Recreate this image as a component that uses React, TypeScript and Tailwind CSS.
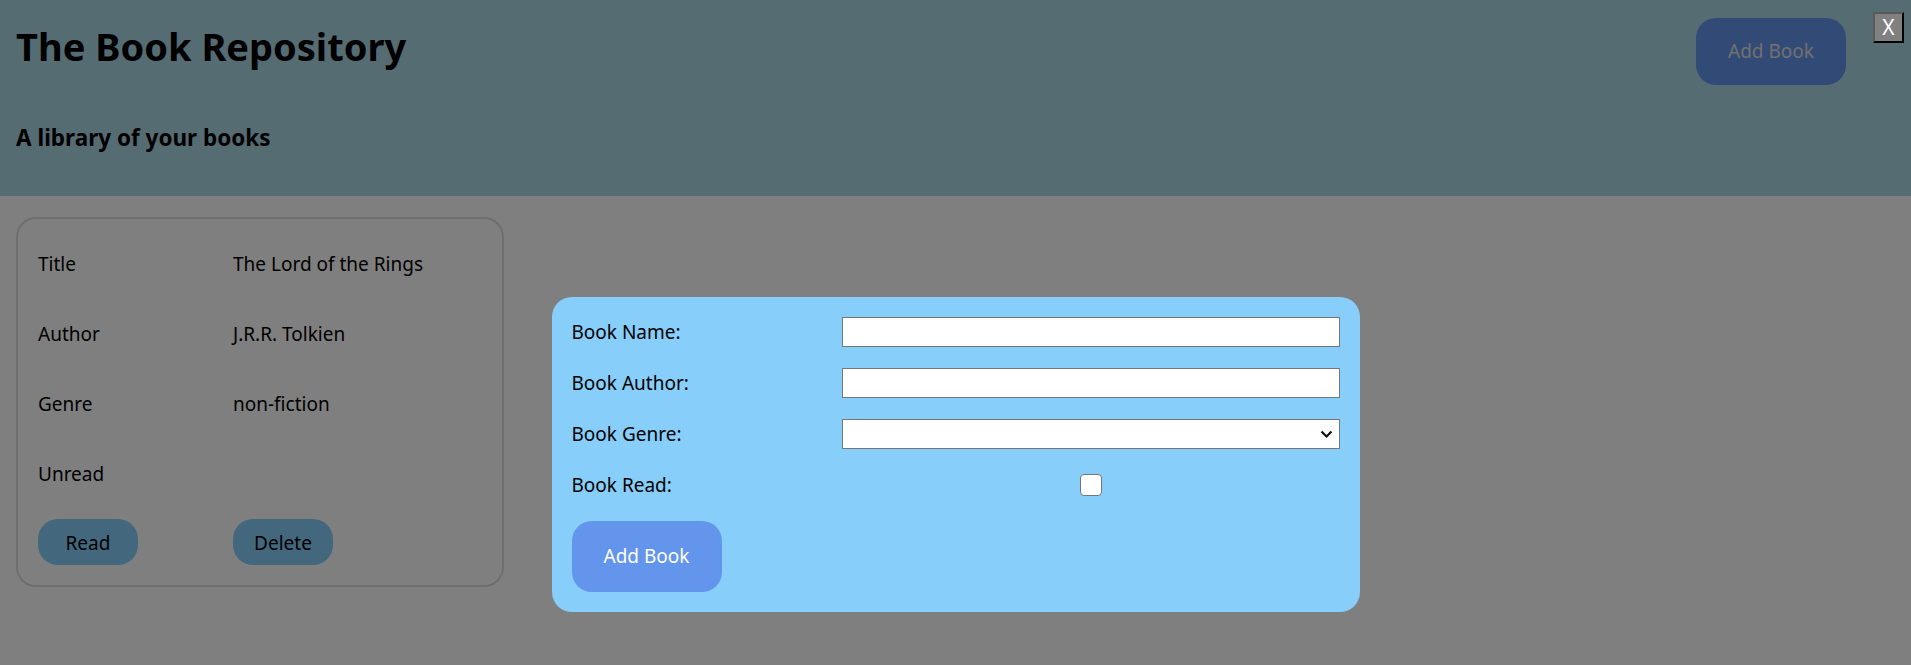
import React from "react";

const book = {
  title: "The Lord of the Rings",
  author: "J.R.R. Tolkien",
  genre: "non-fiction",
  read: false,
};

function BookCard() {
  return (
    <div className="w-[488px] rounded-[20px] border-2 border-[#dcdcdc] p-5 grid grid-cols-[195px_1fr] gap-y-5 text-[19px]">
      <div className="h-[50px] flex items-center">Title</div>
      <div className="h-[50px] flex items-center">{book.title}</div>
      <div className="h-[50px] flex items-center">Author</div>
      <div className="h-[50px] flex items-center">{book.author}</div>
      <div className="h-[50px] flex items-center">Genre</div>
      <div className="h-[50px] flex items-center">{book.genre}</div>
      <div className="h-[50px] flex items-center">{book.read ? "Read" : "Unread"}</div>
      <div className="h-[50px]" />
      <div>
        <button className="w-[100px] h-[46px] rounded-[20px] bg-[#87cefa] text-[19px] pt-[2px]">Read</button>
      </div>
      <div>
        <button className="w-[100px] h-[46px] rounded-[20px] bg-[#87cefa] text-[19px] pt-[2px]">Delete</button>
      </div>
    </div>
  );
}

function AddBookForm() {
  return (
    <form className="w-[808px] rounded-[20px] bg-[#87cefa] p-5 grid grid-cols-[270px_1fr] gap-y-[21px] text-[19px] text-black">
      <label className="h-[30px] flex items-center">Book Name:</label>
      <input type="text" className="h-[30px] bg-white border border-[#767676] px-1" />
      <label className="h-[30px] flex items-center">Book Author:</label>
      <input type="text" className="h-[30px] bg-white border border-[#767676] px-1" />
      <label className="h-[30px] flex items-center">Book Genre:</label>
      <div className="relative h-[30px]">
        <select className="w-full h-[30px] appearance-none bg-white border border-[#767676] px-1">
          <option value=""></option>
          <option>fiction</option>
          <option>non-fiction</option>
        </select>
        <svg
          className="absolute right-[7px] top-[11px] pointer-events-none"
          width="13"
          height="9"
          viewBox="0 0 13 9"
        >
          <path d="M1.5 1.5 L6.5 6.5 L11.5 1.5" fill="none" stroke="#111" strokeWidth="2.2" />
        </svg>
      </div>
      <label className="h-[30px] flex items-center">Book Read:</label>
      <div className="h-[30px] flex items-center justify-center">
        <input
          type="checkbox"
          className="appearance-none w-[22px] h-[22px] rounded-[4px] border border-[#767676] bg-white"
        />
      </div>
      <div className="col-span-2">
        <button
          type="button"
          className="w-[150px] h-[71px] rounded-[20px] bg-[#6495ed] text-white text-[19px]"
        >
          Add Book
        </button>
      </div>
    </form>
  );
}

export default function App() {
  return (
    <div className="relative min-h-screen bg-white text-black font-['Noto_Sans',sans-serif]">
      <header className="h-[196px] bg-[#add8e6] pl-4 pr-[65px] flex justify-between items-start">
        <div>
          <h1 className="mt-[22px] text-[38px] leading-[48px] font-bold">The Book Repository</h1>
          <h3 className="mt-[53px] text-[22.5px] leading-[30px] font-bold">A library of your books</h3>
        </div>
        <button className="mt-[18px] w-[150px] h-[67px] rounded-[20px] bg-[#6495ed] text-[#e0e0e0] text-[19px]">
          Add Book
        </button>
      </header>
      <main className="px-4 pt-[21px] pb-10">
        <BookCard />
      </main>

      <div className="fixed inset-0 bg-black/50" />
      <div className="fixed inset-0 flex justify-center items-start pt-[297px]">
        <AddBookForm />
      </div>
      <button className="fixed top-[12px] right-[7px] w-[31px] h-[31px] bg-[#808080] text-white text-[21px] leading-none border-2 border-t-[#5a5a5a] border-l-[#5a5a5a] border-r-black border-b-black">
        X
      </button>
    </div>
  );
}
